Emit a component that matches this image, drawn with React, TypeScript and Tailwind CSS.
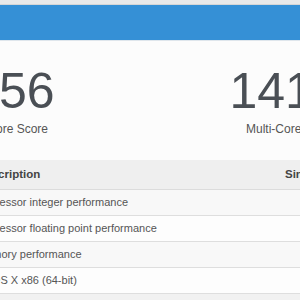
import React from 'react';

const rows = [
  { desc: 'Processor integer performance', bg: 'bg-[#f8f8f8]', shift: '' },
  { desc: 'Processor floating point performance', bg: 'bg-[#fdfdfd]', shift: '' },
  { desc: 'Memory performance', bg: 'bg-[#f8f8f8]', shift: '' },
  { desc: 'Mac OS X x86 (64-bit)', bg: 'bg-[#fdfdfd]', shift: '-ml-[9px]' },
];

export default function App() {
  return (
    <div className="w-[300px] h-[300px] overflow-hidden bg-[#fcfcfc] font-['Liberation_Sans',Arial,sans-serif] text-[#555]">
      <div className="h-[5px] bg-[#e9e9e9] border-b border-[#d6d6d6]" />
      <div className="h-[35px] bg-[#3590d6]" />
      <div className="h-px bg-[#dfe6ec]" />

      {/* Scores */}
      <div className="-ml-[147px] w-[584px] grid grid-cols-2 pt-[25px] pb-[23px]">
        <div className="text-center">
          <div className="text-[50px] leading-[50px] text-[#4a4f55]">1456</div>
          <div className="mt-[5px] text-[12px] leading-[16px]">Single-Core Score</div>
        </div>
        <div className="text-center">
          <div className="pl-[16px] text-[50px] leading-[50px] text-[#4a4f55]">14123</div>
          <div className="mt-[5px] text-[12px] leading-[16px]">Multi-Core Score</div>
        </div>
      </div>

      {/* Table */}
      <div className="-ml-[31px] w-[460px]">
        <div className="flex h-[30px] items-center bg-[#efefef] border-b border-[#dcdcdc] font-bold text-[11.5px] text-[#444]">
          <div className="w-[308px] px-2">Description</div>
          <div className="px-2">Single-Core</div>
        </div>
        {rows.map((r) => (
          <div key={r.desc} className={`flex h-[26px] items-center border-b border-[#dedede] text-[11px] ${r.bg}`}>
            <div className="w-[308px] px-2">
              <div className={r.shift}>{r.desc}</div>
            </div>
            <div className="px-2" />
          </div>
        ))}
        <div className="h-[20px] bg-[#f1f1f1]" />
      </div>
    </div>
  );
}
